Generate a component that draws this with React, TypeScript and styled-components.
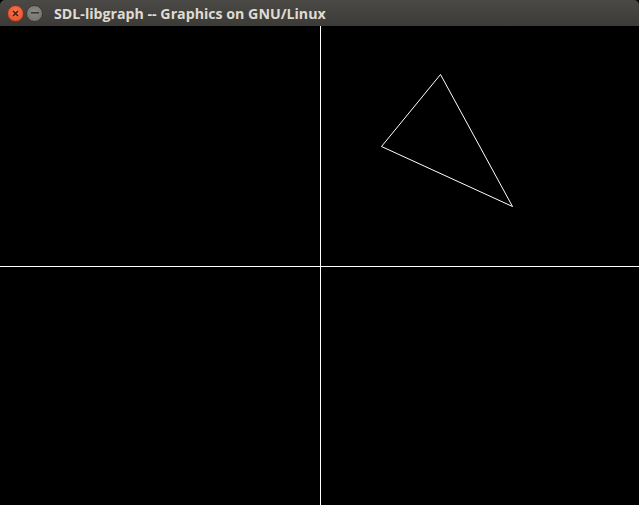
import React from "react";
import styled, { createGlobalStyle } from "styled-components";

const Global = createGlobalStyle`
  html, body { margin: 0; padding: 0; background: #000; }
  body { width: 639px; height: 505px; overflow: hidden; }
`;

const Window = styled.div`
  width: 639px;
  height: 505px;
  display: flex;
  flex-direction: column;
  background: #000;
`;

const TitleBar = styled.div`
  height: 26px;
  flex: 0 0 26px;
  display: flex;
  align-items: center;
  padding-left: 7px;
  gap: 2px;
  background: linear-gradient(#4a4945, #3c3b37);
  border-radius: 5px 5px 0 0;
  box-sizing: border-box;
`;

const Btn = styled.div<{ $close?: boolean }>`
  width: 17px;
  height: 17px;
  border-radius: 50%;
  box-sizing: border-box;
  display: flex;
  align-items: center;
  justify-content: center;
  background: ${(p) =>
    p.$close
      ? "radial-gradient(circle at 50% 40%, #f37b55, #e1491f)"
      : "radial-gradient(circle at 50% 40%, #8d8c87, #6d6c68)"};
  border: 1px solid ${(p) => (p.$close ? "#8b2f12" : "#3a3936")};
`;

const Title = styled.div`
  margin-left: 9px;
  font-family: "Open Sans", "DejaVu Sans", sans-serif;
  font-weight: 700;
  font-size: 14.2px;
  color: #dfdbd2;
  white-space: nowrap;
`;

const Canvas = styled.svg`
  display: block;
  flex: 1 1 auto;
  width: 639px;
  height: 479px;
  background: #000;
`;

export default function App() {
  return (
    <Window>
      <Global />
      <TitleBar>
        <Btn $close>
          <svg width="7" height="7" viewBox="0 0 7 7">
            <path d="M1 1L6 6M6 1L1 6" stroke="#4a1608" strokeWidth="1.4" />
          </svg>
        </Btn>
        <Btn>
          <svg width="8" height="2" viewBox="0 0 8 2">
            <rect x="0" y="0" width="8" height="1.6" fill="#3b3a37" />
          </svg>
        </Btn>
        <Title>SDL-libgraph -- Graphics on GNU/Linux</Title>
      </TitleBar>
      <Canvas viewBox="0 0 639 479">
        <line x1="320.5" y1="0" x2="320.5" y2="479" stroke="#fff" strokeWidth="1" />
        <line x1="0" y1="240.5" x2="639" y2="240.5" stroke="#fff" strokeWidth="1" />
        <polygon
          points="440.5,48.5 381.5,120.5 512.5,180.5"
          fill="none"
          stroke="#fff"
          strokeWidth="1"
        />
      </Canvas>
    </Window>
  );
}
